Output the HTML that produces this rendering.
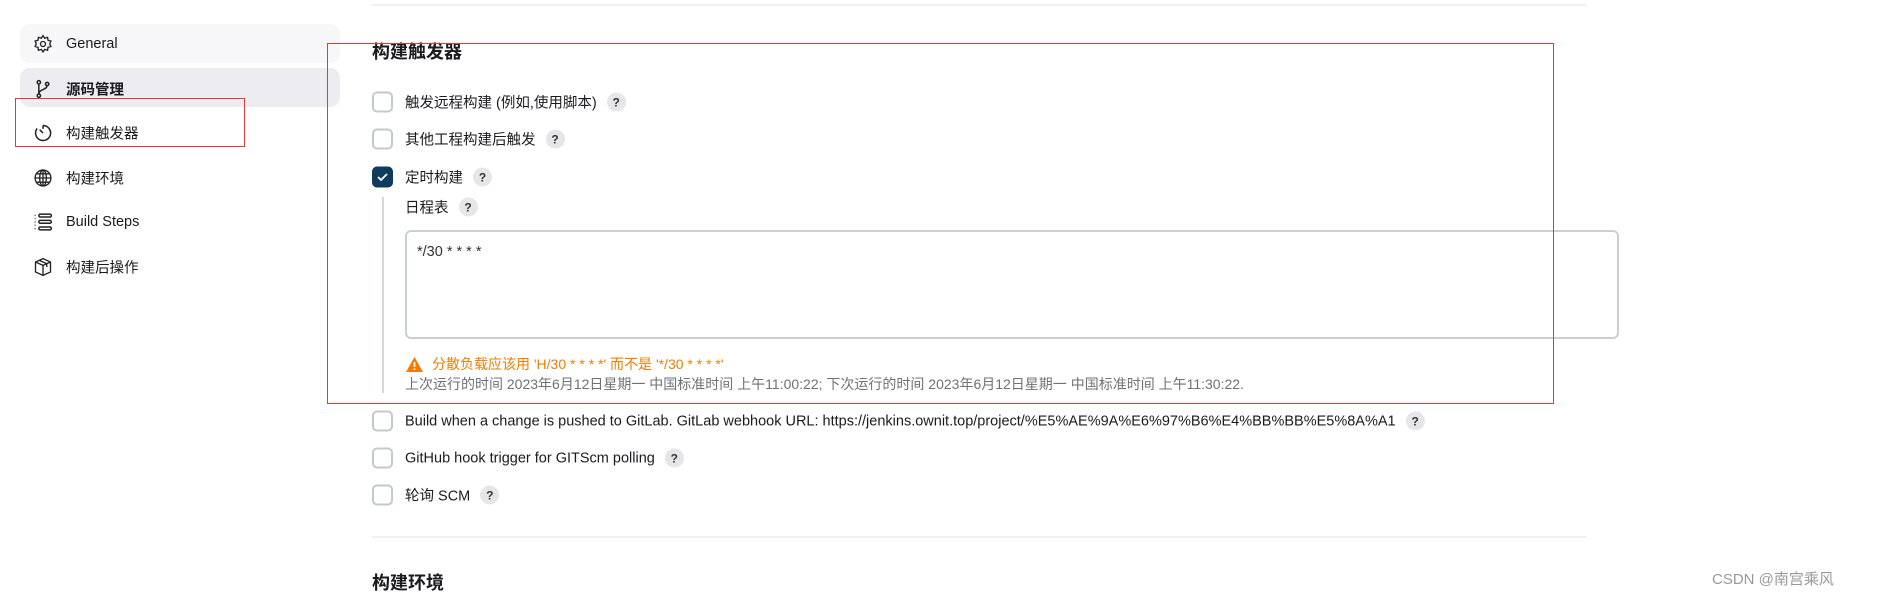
<!DOCTYPE html><html><head><meta charset="utf-8"><style>
*{margin:0;padding:0;box-sizing:border-box}
body{width:1890px;height:596px;background:#fff;font-family:"Liberation Sans","Noto Sans CJK SC",sans-serif;color:#1b1b1f;position:relative;overflow:hidden;font-size:14.5px}
.a{position:absolute;white-space:nowrap}
.pill{position:absolute;left:20px;width:320px;height:39px;border-radius:10px}
.si{position:absolute;left:33px;width:20px;height:20px}
.st{position:absolute;left:66px;transform:translateY(-50%);font-size:14.5px}
.cb{position:absolute;left:372px;width:21px;height:21px;border:2px solid #c3c9cf;border-radius:5px;transform:translateY(-50%)}
.lb{position:absolute;left:405px;transform:translateY(-50%);white-space:nowrap;display:flex;align-items:center}
.q{display:inline-flex;width:19px;height:19px;border-radius:50%;background:#e6e6e9;font-size:12px;font-weight:bold;align-items:center;justify-content:center;margin-left:10px;color:#333}
</style></head><body>
<div class="a" style="left:372px;top:4px;width:1215px;height:2px;background:#f0f0f3"></div>
<div class="pill" style="top:24px;background:#f7f7f9"></div>
<div class="pill" style="top:68px;background:#ececf1"></div>
<svg class="si" style="top:34px" viewBox="0 0 24 24" fill="none" stroke="#222" stroke-width="1.6"><circle cx="12" cy="12" r="3"/><path d="M12 2l2 3 3.5-1 .5 3.5 3.5 1-1.5 3.5 1.5 3-3.5 1-.5 3.5-3.5-1-2 3-2-3-3.5 1-.5-3.5-3.5-1 1.5-3-1.5-3.5 3.5-1 .5-3.5 3.5 1z"/></svg>
<div class="st" style="top:44px">General</div>
<svg class="si" style="top:79px" viewBox="0 0 24 24" fill="none" stroke="#222" stroke-width="1.8"><circle cx="7" cy="4" r="2"/><circle cx="7" cy="20" r="2"/><circle cx="17" cy="6" r="2"/><path d="M7 6v12M17 8c0 5-10 4-10 10"/></svg>
<div class="st" style="top:89px;font-weight:bold">源码管理</div>
<svg class="si" style="top:123px" viewBox="0 0 24 24" fill="none" stroke="#222" stroke-width="1.8"><path d="M12 3a9 9 0 1 1-7 3.5M12 3v4M12 12L8 8"/></svg>
<div class="st" style="top:133px">构建触发器</div>
<svg class="si" style="top:168px" viewBox="0 0 24 24" fill="none" stroke="#222" stroke-width="1.6"><circle cx="12" cy="12" r="9.5"/><ellipse cx="12" cy="12" rx="4" ry="9.5"/><path d="M2.5 12h19M4 7h16M4 17h16M12 2.5v19"/></svg>
<div class="st" style="top:178px">构建环境</div>
<svg class="si" style="top:212px" viewBox="0 0 24 24" fill="none" stroke="#222" stroke-width="1.8"><path d="M2 4h1M2 12h1M2 20h1M2 8h1M2 16h1"/><rect x="7" y="2.5" width="15" height="3.5" rx="1.7"/><rect x="7" y="10" width="15" height="3.5" rx="1.7"/><rect x="7" y="18" width="15" height="3.5" rx="1.7"/></svg>
<div class="st" style="top:222px">Build Steps</div>
<svg class="si" style="top:257px" viewBox="0 0 24 24" fill="none" stroke="#222" stroke-width="1.6"><path d="M12 2l9 4v12l-9 4-9-4V6zM3 6l9 4 9-4M12 10v12M7.5 4l9 4v4"/></svg>
<div class="st" style="top:267px">构建后操作</div>
<div class="a" style="left:15px;top:98px;width:230px;height:49px;border:1px solid #e53935"></div>

<div class="a" style="left:372px;top:38px;font-size:18px;font-weight:bold">构建触发器</div>
<div class="cb" style="top:102px"></div><div class="lb" style="top:102px">触发远程构建 (例如,使用脚本)<span class="q">?</span></div>
<div class="cb" style="top:139px"></div><div class="lb" style="top:139px">其他工程构建后触发<span class="q">?</span></div>
<div class="cb" style="top:177px;background:#0f3b5c;border-color:#0f3b5c"><svg width="17" height="17" viewBox="0 0 17 17" style="position:absolute;left:0;top:0"><path d="M4 8.5l3 3 6-6" stroke="#fff" stroke-width="1.8" fill="none"/></svg></div>
<div class="lb" style="top:177px">定时构建<span class="q">?</span></div>
<div class="a" style="left:382px;top:197px;width:2px;height:196px;background:#d4d8dc"></div>
<div class="lb" style="top:207px">日程表<span class="q">?</span></div>
<div class="a" style="left:405px;top:230px;width:1214px;height:109px;border:2px solid #c9cfd3;border-radius:6px;padding:12px 10px;font-size:14.5px;color:#333">*/30 * * * *</div>
<div class="a" style="left:405px;top:354px;color:#f57c00;font-size:14px;display:flex;align-items:center"><svg width="19" height="17" viewBox="0 0 19 17" style="margin-right:8px"><path d="M9.5 1L18 16H1z" fill="#f57c00"/><path d="M9.5 6v5M9.5 12.5v1.5" stroke="#fff" stroke-width="1.8"/></svg>分散负载应该用 'H/30 * * * *' 而不是 '*/30 * * * *'</div>
<div class="a" style="left:405px;top:374px;color:#6d7178;font-size:14px">上次运行的时间 2023年6月12日星期一 中国标准时间 上午11:00:22; 下次运行的时间 2023年6月12日星期一 中国标准时间 上午11:30:22.</div>
<div class="a" style="left:327px;top:43px;width:1227px;height:361px;border:1px solid #e53935"></div>

<div class="cb" style="top:421px"></div><div class="lb" style="top:421px">Build when a change is pushed to GitLab. GitLab webhook URL: https://jenkins.ownit.top/project/%E5%AE%9A%E6%97%B6%E4%BB%BB%E5%8A%A1<span class="q">?</span></div>
<div class="cb" style="top:458px"></div><div class="lb" style="top:458px">GitHub hook trigger for GITScm polling<span class="q">?</span></div>
<div class="cb" style="top:495px"></div><div class="lb" style="top:495px">轮询 SCM<span class="q">?</span></div>
<div class="a" style="left:372px;top:536px;width:1215px;height:2px;background:#f0f0f3"></div>
<div class="a" style="left:372px;top:569px;font-size:18px;font-weight:bold">构建环境</div>
<div class="a" style="left:1712px;top:568px;font-size:15px;color:#999">CSDN @南宫乘风</div>
</body></html>
